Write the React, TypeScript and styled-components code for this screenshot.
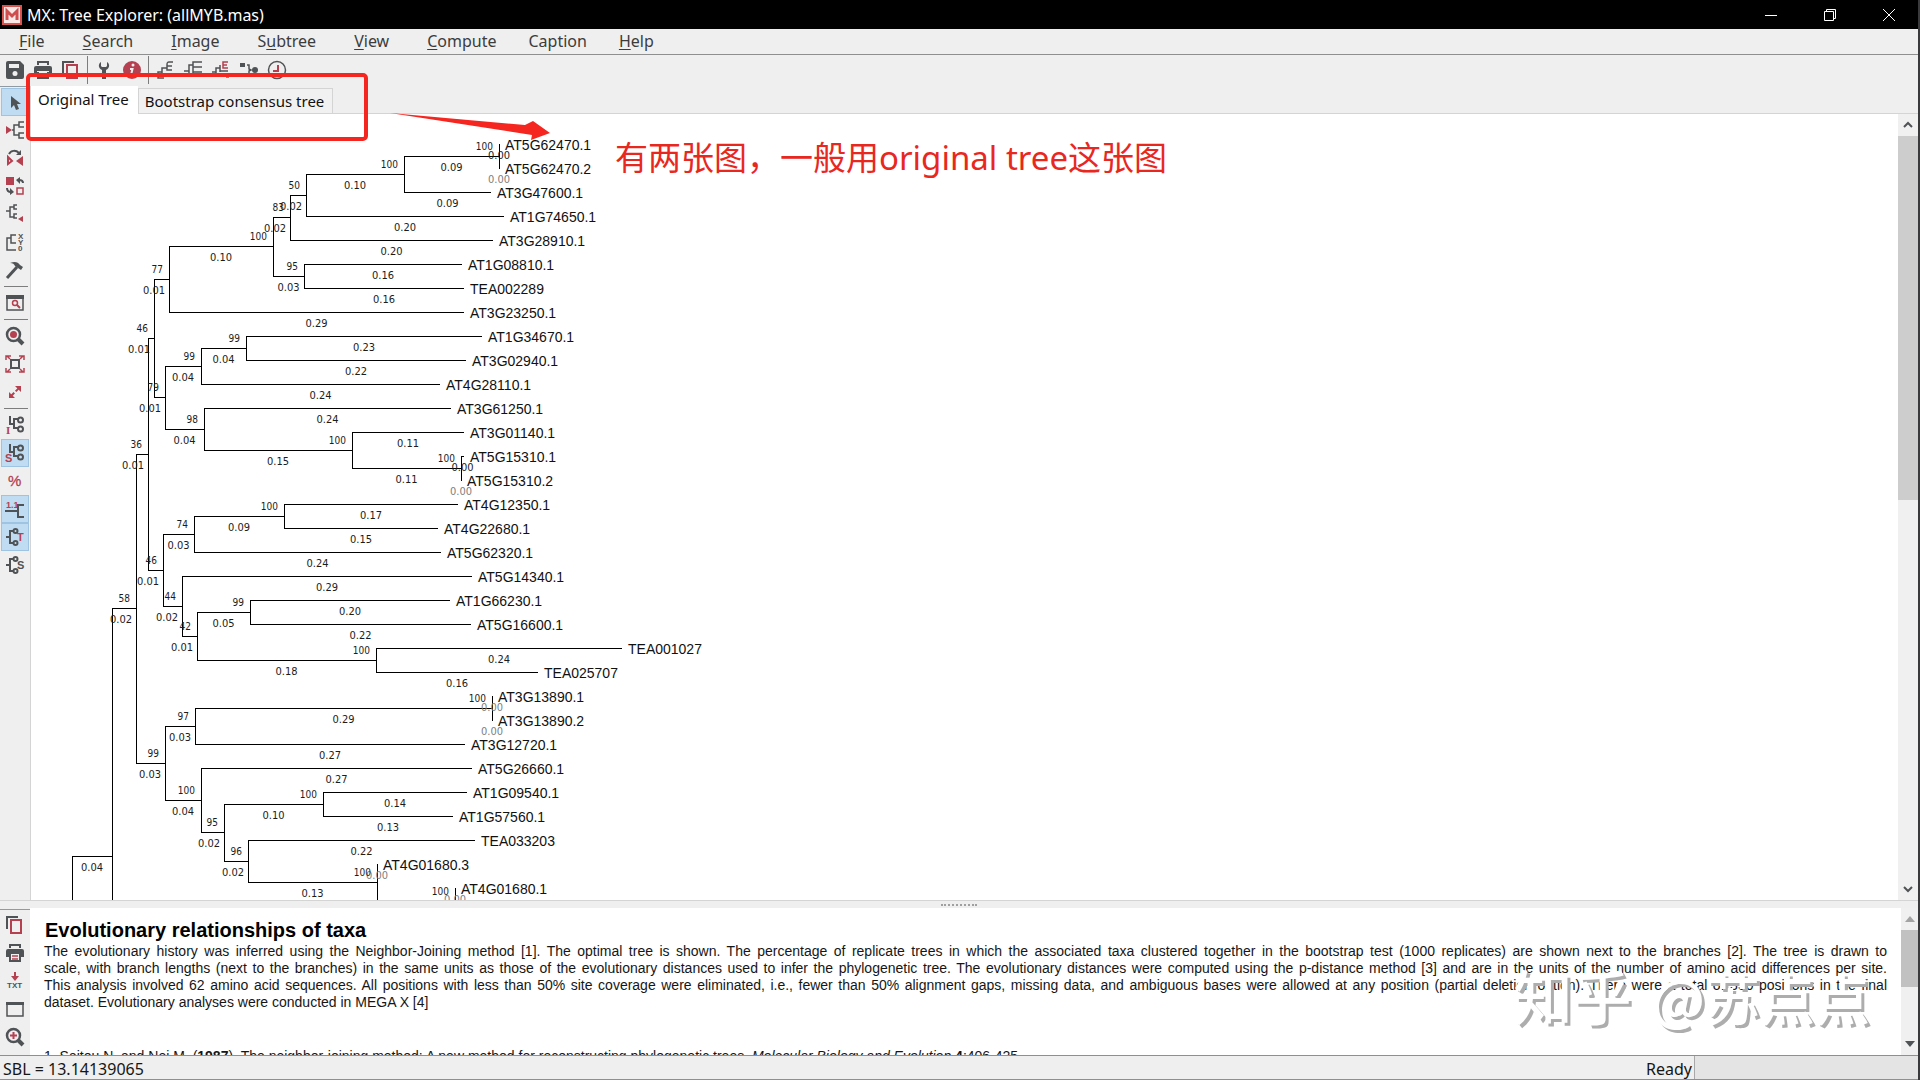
import React from "react";
import styled, { createGlobalStyle } from "styled-components";

const ui = `"Noto Sans", "Open Sans", "Noto Sans CJK SC", sans-serif`;
const arial = `"Liberation Sans", Arial, sans-serif`;
const dark = "#505355";
const red = "#b5404f";

const GlobalStyle = createGlobalStyle`
  * { box-sizing: border-box; }
  body { margin: 0; background: #efefef; font-family: ${ui}; overflow: hidden; }
  button { font: inherit; color: inherit; border: 0; background: none; padding: 0; margin: 0; }
`;

/* ---------- frame ---------- */

const Window = styled.div`
  position: relative;
  display: flex;
  flex-direction: column;
  height: 100vh;
  background: #efefef;
  border-right: 2px solid #3a3a3c;
`;

const TitleBar = styled.header`
  display: flex;
  align-items: center;
  flex: none;
  height: 29px;
  padding-left: 2px;
  gap: 5px;
  background: #000;
  color: #fff;
`;

const Title = styled.h1`
  flex: 1;
  margin: 0;
  font-size: 16px;
  font-weight: 400;
  line-height: 28px;
`;

const ButtonRow = styled.div`
  display: flex;
`;

const CaptionButton = styled.button`
  display: grid;
  place-items: center;
  width: 59px;
  height: 28px;
`;

const MenuBar = styled.nav`
  display: flex;
  align-items: center;
  flex: none;
  height: 26px;
  padding-bottom: 1px;
  border-bottom: 1px solid #8f8f8f;
  color: #3c3c3c;
  font-size: 16px;
  line-height: 22px;
`;

const MenuButton = styled.button<{ $tight?: boolean }>`
  padding: 0 ${(p) => (p.$tight ? 13 : 19)}px;
  u { text-underline-offset: 2px; }
`;

const ToolBar = styled.div`
  display: flex;
  align-items: center;
  flex: none;
  height: 31px;
  padding: 0 0 2px 1px;
`;

const ToolButton = styled.button<{ $on?: boolean }>`
  display: grid;
  place-items: center;
  flex: none;
  width: 28px;
  height: 28px;
  border: 1px solid ${(p) => (p.$on ? "#9fc4e2" : "transparent")};
  background: ${(p) => (p.$on ? "#bfdcf3" : "transparent")};
`;

const Separator = styled.span<{ $across?: boolean }>`
  flex: none;
  align-self: center;
  width: ${(p) => (p.$across ? "24px" : "5px")};
  height: ${(p) => (p.$across ? "5px" : "28px")};
  background: linear-gradient(#7d7d7d, #7d7d7d) center / ${(p) => (p.$across ? "100% 1px" : "1px 100%")} no-repeat;
`;

const Pane = styled.section<{ $height?: number }>`
  display: flex;
  flex: ${(p) => (p.$height ? `0 0 ${p.$height}px` : "1 1 0")};
  min-height: 0;
`;

const SideBar = styled.div<{ $lower?: boolean }>`
  display: flex;
  flex-direction: column;
  flex: none;
  width: 30px;
  margin-top: ${(p) => (p.$lower ? 1 : 0)}px;
  padding: 1px 0 0 1px;
  border-top: 1px solid #8f9aa3;
`;

const TreeColumn = styled.div`
  display: flex;
  flex-direction: column;
  flex: 1;
  min-width: 0;
`;

const Tabs = styled.div`
  display: flex;
  align-items: flex-end;
  flex: none;
  height: 28px;
  border-bottom: 1px solid #d4d4d4;
  border-left: 1px solid #d4d4d4;
`;

const Tab = styled.button<{ $on?: boolean }>`
  height: ${(p) => (p.$on ? 28 : 26)}px;
  margin-bottom: -1px;
  padding: ${(p) => (p.$on ? "0 9px 2px 7px" : "0 8px 0 6px")};
  border: ${(p) => (p.$on ? "0" : "1px solid #d4d4d4")};
  background: ${(p) => (p.$on ? "#fff" : "#f1f1f1")};
  color: #111;
  font-size: 15px;
  line-height: 22px;
`;

const CanvasRow = styled.div`
  display: flex;
  flex: 1;
  min-height: 0;
  background: #fff;
  border-left: 1px solid #d4d4d4;
`;

const Canvas = styled.div`
  flex: 1;
  min-width: 0;
  overflow: hidden;
`;

const ScrollBar = styled.div<{ $width: number }>`
  display: flex;
  flex-direction: column;
  flex: none;
  width: ${(p) => p.$width}px;
  background: #f0f0f0;
`;

const ScrollButton = styled.button`
  display: grid;
  place-items: center;
  flex: none;
  height: 22px;
`;

const Thumb = styled.div<{ $share: string; $color: string }>`
  height: ${(p) => p.$share};
  background: ${(p) => p.$color};
`;

const Track = styled.div`
  flex: 1;
  min-height: 0;
`;

const Splitter = styled.div`
  display: flex;
  justify-content: center;
  align-items: center;
  flex: none;
  height: 8px;
  border-top: 1px solid #d4d4d4;
`;

const Grip = styled.span`
  width: 36px;
  border-top: 2px dotted #a0a0a0;
`;

const Article = styled.article`
  flex: 1;
  min-width: 0;
  overflow: hidden;
  padding: 10px 14px 0;
  background: #fff;
  color: #161616;
  font-family: ${arial};
  font-size: 14px;
  line-height: 17px;

  h2 { margin: 0; padding-left: 1px; color: #000; font-size: 20px; line-height: 25px; }
  p { margin: 0; }
  p + p { margin-top: 37px; }
`;

const Line = styled.span<{ $last?: boolean }>`
  display: block;
  text-align: justify;
  text-align-last: ${(p) => (p.$last ? "left" : "justify")};
`;

const StatusBar = styled.footer`
  display: flex;
  justify-content: space-between;
  flex: none;
  height: 25px;
  overflow: hidden;
  border-top: 1px solid #8f8f8f;
  border-bottom: 1px solid #8f8f8f;
  padding-left: 3px;
  color: #161616;
  font-size: 16px;
  line-height: 26px;
`;

const StatusRight = styled.div`
  display: flex;
  gap: 2px;
`;

const Progress = styled.div`
  width: 224px;
  background: #e4e4e4;
  border-left: 1px solid #a8a8a8;
`;

/* ---------- notes lying over the window ---------- */

const RedFrame = styled.div`
  position: absolute;
  left: 26px;
  top: 73px;
  width: 342px;
  height: 68px;
  border: 4px solid #f5261f;
  border-radius: 5px;
  pointer-events: none;
`;

const Arrow = styled.svg`
  position: absolute;
  left: 388px;
  top: 110px;
  pointer-events: none;
`;

const Note = styled.p`
  position: absolute;
  left: 615px;
  top: 134px;
  margin: 0;
  color: #e8281f;
  font-family: "Noto Sans", "Noto Sans CJK SC", sans-serif;
  font-size: 33px;
  line-height: 48px;
  white-space: nowrap;
`;

const Watermark = styled.p`
  position: absolute;
  right: 48px;
  bottom: 52px;
  display: flex;
  align-items: baseline;
  gap: 20px;
  margin: 0;
  color: #fff;
  font-family: "Noto Sans CJK SC", sans-serif;
  font-size: 55px;
  font-weight: 500;
  line-height: 64px;
  text-shadow: 3px 3px 0 #adadad;
  white-space: nowrap;
  pointer-events: none;

  b { font-size: 59px; font-weight: 500; }
`;

/* ---------- icons ---------- */

const Svg = ({ children }: { children: React.ReactNode }) => (
  <svg width="20" height="20" viewBox="0 0 20 20" fill="none" stroke={dark} strokeWidth="2" aria-hidden="true">
    {children}
  </svg>
);

const Glyph = ({ x, y, size, color, children }: { x: number; y: number; size: number; color: string; children: string }) => (
  <text x={x} y={y} fontSize={size} fill={color} stroke="none" fontWeight="700" fontFamily="Liberation Sans, sans-serif">
    {children}
  </text>
);

const icons: Record<string, React.ReactNode> = {
  Save: (
    <Svg>
      <path d="M3 1h12l4 4v12a2 2 0 0 1-2 2H3a2 2 0 0 1-2-2V3a2 2 0 0 1 2-2z" fill={dark} stroke="none" />
      <path d="M4 4h10v4H4z" fill="#efefef" stroke="none" />
      <circle cx="10" cy="13.5" r="2.5" fill="#efefef" stroke="none" />
    </Svg>
  ),
  Print: (
    <Svg>
      <path d="M5 5V2h10v3" />
      <path d="M3 6h14a2 2 0 0 1 2 2v6h-3v-3H4v3H1V8a2 2 0 0 1 2-2z" fill={dark} stroke="none" />
      <path d="M5 12v6h10v-6" />
    </Svg>
  ),
  "Print caption": (
    <Svg>
      <path d="M5 5V2h10v3" />
      <path d="M3 6h14a2 2 0 0 1 2 2v6h-3v-3H4v3H1V8a2 2 0 0 1 2-2z" fill={dark} stroke="none" />
      <path d="M5 11v7h10v-7" />
      <path d="M7 13h6M7 16h6" stroke={red} strokeWidth="1.5" />
    </Svg>
  ),
  Copy: (
    <Svg>
      <path d="M2 14V2h11" />
      <path d="M6 5h10v13H6z" stroke={red} />
    </Svg>
  ),
  Options: (
    <Svg>
      <path d="M7 2c-3 2-3 6 1 8v9h4v-9c4-2 4-6 1-8v4l-1 1H8L7 6z" fill={dark} stroke="none" />
    </Svg>
  ),
  Information: (
    <Svg>
      <circle cx="10" cy="10" r="9" fill={red} stroke="none" />
      <circle cx="11" cy="5" r="1.5" fill="#efefef" stroke="none" />
      <path d="M8 9h2.5L9 15h3" stroke="#efefef" />
    </Svg>
  ),
  "Sort by order": (
    <Svg>
      <path d="M9 18H3v-6h4M7 15V8h5M7 14h6M18 2h-4c-2 0-2 1-2 3v5h5M12 6h5" strokeWidth="1.5" />
    </Svg>
  ),
  "Balance shape": (
    <Svg>
      <path d="M1 11h5M6 17V5h4M6 16h13M10 13V2h9M10 7h9M10 12h9" strokeWidth="1.5" />
    </Svg>
  ),
  "Root on midpoint": (
    <Svg>
      <path d="M1 12h4M5 17V8h4M5 16h8M9 12V5M9 11h8" strokeWidth="1.5" />
      <path d="M17 2h-5v6h5M12 5h4M15 17h3" stroke={red} strokeWidth="1.5" />
    </Svg>
  ),
  "Compress subtrees": (
    <Svg>
      <path d="M1 3h5v4H1zM1 13h5v4H1z" fill={dark} stroke="none" />
      <path d="M8 5h2v4l2 1-2 1v4H8" strokeWidth="1.5" />
      <circle cx="16" cy="10" r="3" fill={dark} stroke="none" />
    </Svg>
  ),
  Timetree: (
    <Svg>
      <circle cx="10" cy="10" r="8.5" strokeWidth="1.5" />
      <path d="M11 5v6H6" stroke={red} />
    </Svg>
  ),
  Select: (
    <Svg>
      <path d="M6 4v12l3-3 2 5 3-1-2-5h4z" fill={dark} stroke="none" />
    </Svg>
  ),
  "Place root": (
    <Svg>
      <path d="M1 6l6 4-6 4z" fill={red} stroke="none" />
      <path d="M7 10h2M19 2h-5v5h5M19 13h-5v5h5M14 5H9v10h5" strokeWidth="1.5" />
    </Svg>
  ),
  "Flip subtree": (
    <Svg>
      <path d="M4 6c2-4 7-4 10-1" />
      <path d="M11 7h5V2z" fill={dark} stroke="none" />
      <path d="M3 9l4 4-4 3z" stroke={red} />
      <path d="M18 8v10l-7-5z" fill={red} stroke="none" />
    </Svg>
  ),
  "Swap subtree": (
    <Svg>
      <path d="M1 1h8v8H1z" fill={red} stroke="none" />
      <path d="M12 12h6v6h-6z" stroke={red} strokeWidth="1.5" />
      <path d="M18 7c0-2-1-3-4-3M2 12c0 3 1 4 4 4" />
      <path d="M15 1v7l-4-4zM5 12v7l4-3z" fill={dark} stroke="none" />
    </Svg>
  ),
  "Compress subtree": (
    <Svg>
      <path d="M1 7h4M9 3H5v10h4M12 1H9v4h3M12 10H9v4h3" strokeWidth="1.5" />
      <path d="M18 12v6l-5-3z" fill={red} stroke="none" />
    </Svg>
  ),
  "Name subtree": (
    <Svg>
      <path d="M11 3H6v8h5M6 6H2v12h9" strokeWidth="1.5" />
      <Glyph x={13} y={7} size={8} color={dark}>X</Glyph>
      <Glyph x={13} y={13} size={8} color={dark}>Y</Glyph>
      <Glyph x={13} y={19} size={8} color={dark}>0</Glyph>
    </Svg>
  ),
  "Edit subtree": (
    <Svg>
      <path d="M2 18L12 7" strokeWidth="3" />
      <path d="M5 3c5-2 8-1 10 2l3 2-2 3-3-2-3-2c-1-2-2-3-5-3z" fill={dark} stroke="none" />
    </Svg>
  ),
  "Subtree window": (
    <Svg>
      <path d="M2 3h16v14H2z" strokeWidth="1.5" />
      <path d="M1 2h18v4H1z" fill={dark} stroke="none" />
      <circle cx="10" cy="10" r="2.5" stroke={red} strokeWidth="1.5" />
      <path d="M12 12l3 3" stroke={red} />
    </Svg>
  ),
  Zoom: (
    <Svg>
      <circle cx="8.5" cy="8.5" r="6.5" strokeWidth="2.5" />
      <circle cx="8.5" cy="8.5" r="3.5" fill={red} stroke="none" />
      <path d="M13 13l5 5" strokeWidth="4" />
    </Svg>
  ),
  "Fit to window": (
    <Svg>
      <path d="M6 6h8v8H6z" />
      <path d="M1 6V2h5M14 2h5v4M19 14v4h-5M6 18H1v-4M2 2l3 3M18 2l-3 3M18 18l-3-3M2 18l3-3" stroke={red} strokeWidth="1.5" />
    </Svg>
  ),
  "Resize tree": (
    <Svg>
      <path d="M5 15L15 5" stroke={red} strokeWidth="2" strokeDasharray="6 2" />
      <path d="M16 4v6l-6-6zM4 16v-6l6 6z" fill={red} stroke="none" />
    </Svg>
  ),
  "Node IDs": (
    <Svg>
      <path d="M5 1v8h4M9 14V4h4M9 13h4" />
      <circle cx="15.5" cy="5" r="2.5" />
      <circle cx="15.5" cy="14" r="2.5" />
      <text x="1" y="19" fontSize="11" fill={red} stroke="none" fontWeight="700" fontFamily="Liberation Serif, serif">I</text>
    </Svg>
  ),
  "Bootstrap values": (
    <Svg>
      <path d="M5 1v8h4M9 14V4h4M9 13h4" />
      <circle cx="15.5" cy="5" r="2.5" />
      <circle cx="15.5" cy="14" r="2.5" />
      <Glyph x={0} y={19} size={11} color={red}>S</Glyph>
    </Svg>
  ),
  "Percent coverage": (
    <Svg>
      <text x="3" y="15" fontSize="15" fill={red} stroke={red} strokeWidth="0.3" fontFamily="Liberation Sans, sans-serif">%</text>
    </Svg>
  ),
  "Branch lengths": (
    <Svg>
      <Glyph x={1} y={9} size={9} color={red}>1.1</Glyph>
      <path d="M0 12h12M19 6h-6v12h6" />
    </Svg>
  ),
  "Taxon names": (
    <Svg>
      <path d="M1 10h3M9 4H5v12h4" />
      <circle cx="10.5" cy="4" r="2" />
      <circle cx="10.5" cy="16" r="2" />
      <Glyph x={12} y={14} size={11} color={red}>T</Glyph>
    </Svg>
  ),
  "Node statistics": (
    <Svg>
      <path d="M1 10h3M9 4H5v12h4" />
      <circle cx="10.5" cy="4" r="2" />
      <circle cx="10.5" cy="16" r="2" />
      <Glyph x={12} y={14} size={11} color={dark}>S</Glyph>
    </Svg>
  ),
  "Save as text": (
    <Svg>
      <path d="M10 1v6" stroke={red} />
      <path d="M6 5h8l-4 5z" fill={red} stroke="none" />
      <Glyph x={2} y={17} size={8} color={dark}>TXT</Glyph>
    </Svg>
  ),
  "Caption window": (
    <Svg>
      <path d="M2 4h16v13H2z" strokeWidth="1.5" />
      <path d="M1 3h18v3H1z" fill={dark} stroke="none" />
    </Svg>
  ),
  "Zoom in": (
    <Svg>
      <circle cx="8.5" cy="8.5" r="6.5" strokeWidth="2.5" />
      <path d="M8.5 5v7M5 8.5h7" stroke={red} />
      <path d="M13 13l5 5" strokeWidth="4" />
    </Svg>
  ),
};

const Tools = ({ names, on = [], across }: { names: string[]; on?: string[]; across?: boolean }) => (
  <>
    {names.map((name, i) =>
      name === "|" ? (
        <Separator key={i} $across={across} />
      ) : (
        <ToolButton key={i} type="button" aria-label={name} $on={on.includes(name)}>
          {icons[name]}
        </ToolButton>
      )
    )}
  </>
);

/* ---------- tree ---------- */

type TreeNode = { x: number; y: number; len?: string; support?: number; name?: string; grey?: boolean; kids: TreeNode[] };

const FIRST_ROW = 144;
const ROW = 24;
let row = 0;

const leaf = (name: string, x: number, len: string, grey = false): TreeNode => ({
  x, len, name, grey, y: FIRST_ROW + ROW * row++, kids: [],
});
const off = (x: number, y: number): TreeNode => ({ x, y, kids: [] });
const node = (x: number, support: number | undefined, len: string | undefined, ...kids: TreeNode[]): TreeNode => ({
  x, support, len, kids, y: Math.round((kids[0].y + kids[1].y) / 2 - 0.25),
});

const tree = node(72, undefined, undefined,
  node(112, undefined, "0.04",
    node(136, 58, "0.02",
      node(148, 36, "0.01",
        node(154, 46, "0.01",
          node(169, 77, "0.01",
            node(273, 100, "0.10",
              node(290, 83, "0.02",
                node(306, 50, "0.02",
                  node(404, 100, "0.10",
                    node(499, 100, "0.09", leaf("AT5G62470.1", 499, "0.00"), leaf("AT5G62470.2", 499, "0.00", true)),
                    leaf("AT3G47600.1", 491, "0.09")),
                  leaf("AT1G74650.1", 504, "0.20")),
                leaf("AT3G28910.1", 493, "0.20")),
              node(304, 95, "0.03", leaf("AT1G08810.1", 462, "0.16"), leaf("TEA002289", 464, "0.16"))),
            leaf("AT3G23250.1", 464, "0.29")),
          node(165, 79, "0.01",
            node(201, 99, "0.04",
              node(246, 99, "0.04", leaf("AT1G34670.1", 482, "0.23"), leaf("AT3G02940.1", 466, "0.22")),
              leaf("AT4G28110.1", 440, "0.24")),
            node(204, 98, "0.04",
              leaf("AT3G61250.1", 451, "0.24"),
              node(352, 100, "0.15",
                leaf("AT3G01140.1", 464, "0.11"),
                node(461, 100, "0.11", leaf("AT5G15310.1", 464, "0.00"), leaf("AT5G15310.2", 461, "0.00", true)))))),
        node(163, 46, "0.01",
          node(194, 74, "0.03",
            node(284, 100, "0.09", leaf("AT4G12350.1", 458, "0.17"), leaf("AT4G22680.1", 438, "0.15")),
            leaf("AT5G62320.1", 441, "0.24")),
          node(182, 44, "0.02",
            leaf("AT5G14340.1", 472, "0.29"),
            node(197, 42, "0.01",
              node(250, 99, "0.05", leaf("AT1G66230.1", 450, "0.20"), leaf("AT5G16600.1", 471, "0.22")),
              node(376, 100, "0.18", leaf("TEA001027", 622, "0.24"), leaf("TEA025707", 538, "0.16")))))),
      node(165, 99, "0.03",
        node(195, 97, "0.03",
          node(492, 100, "0.29", leaf("AT3G13890.1", 492, "0.00", true), leaf("AT3G13890.2", 492, "0.00", true)),
          leaf("AT3G12720.1", 465, "0.27")),
        node(201, 100, "0.04",
          leaf("AT5G26660.1", 472, "0.27"),
          node(224, 95, "0.02",
            node(323, 100, "0.10", leaf("AT1G09540.1", 467, "0.14"), leaf("AT1G57560.1", 453, "0.13")),
            node(248, 96, "0.02",
              leaf("TEA033203", 475, "0.22"),
              node(377, 100, "0.13",
                leaf("AT4G01680.3", 377, "0.00", true),
                node(455, 100, undefined, leaf("AT4G01680.1", 455, "0.00", true), off(455, 914)))))))),
    off(112, 1104)),
  off(72, 1300));

const TreeSvg = styled.svg`
  display: block;
  path { stroke: #000; fill: none; shape-rendering: crispEdges; }
  text { fill: #1c1c1c; font-family: "DejaVu Sans Condensed", "DejaVu Sans", sans-serif; font-size: 10px; }
  .length { font-size: 11px; }
  .name { fill: #111; font-family: ${arial}; font-size: 14px; }
  .grey { fill: #808080; }
`;

const Branch = ({ node: n, from }: { node: TreeNode; from?: number }) => {
  const y = n.y + 0.5;
  const isLeaf = n.kids.length === 0;
  const middle = from === undefined ? n.x : (from + n.x) / 2;
  const lenX = isLeaf ? middle : Math.min(middle, n.x - 15);
  return (
    <g>
      {from !== undefined && <path d={`M${from} ${y}H${isLeaf ? n.x : n.x + 1}`} />}
      {!isLeaf && <path d={`M${n.x + 0.5} ${n.kids[0].y}V${n.kids[1].y + 1}`} />}
      {n.kids.map((kid, i) => <Branch key={i} node={kid} from={n.x} />)}
      {n.len && <text className={n.grey ? "length grey" : "length"} x={lenX} y={n.y + 15} textAnchor="middle">{n.len}</text>}
      {n.support && <text x={n.x - 6} y={n.y - 6} textAnchor="end">{n.support}</text>}
      {n.name && <text className="name" x={n.x + 6} y={n.y + 6}>{n.name}</text>}
    </g>
  );
};

/* ---------- page ---------- */

const menus = [["", "F", "ile"], ["", "S", "earch"], ["", "I", "mage"], ["S", "u", "btree"], ["", "V", "iew"], ["", "C", "ompute"], ["Caption", "", ""], ["", "H", "elp"]];

export default function App() {
  return (
    <Window>
      <GlobalStyle />
      <TitleBar>
        <svg width="20" height="20" viewBox="0 0 20 20" aria-hidden="true">
          <path d="M0 0h20v20H0z" fill="#d9534f" />
          <path d="M2 2h16v16H2z" fill="#fbe9e7" />
          <path d="M5 15V6l5 5 5-5v9" fill="none" stroke="#cf4f50" strokeWidth="3" />
        </svg>
        <Title>MX: Tree Explorer: (allMYB.mas)</Title>
        <ButtonRow>
          <CaptionButton type="button" aria-label="Minimize">
            <svg width="14" height="14" viewBox="0 0 14 14" stroke="#fff"><path d="M1 7.5h12" /></svg>
          </CaptionButton>
          <CaptionButton type="button" aria-label="Restore">
            <svg width="14" height="14" viewBox="0 0 14 14" fill="none" stroke="#fff"><path d="M1.5 3.5h9v9h-9zM3.5 3V1.5h9v9H11" /></svg>
          </CaptionButton>
          <CaptionButton type="button" aria-label="Close">
            <svg width="14" height="14" viewBox="0 0 14 14" stroke="#fff"><path d="M1 1l12 12M13 1L1 13" /></svg>
          </CaptionButton>
        </ButtonRow>
      </TitleBar>

      <MenuBar aria-label="Main menu">
        {menus.map(([a, key, b]) => (
          <MenuButton key={a + key + b} type="button" $tight={a === "Caption"}>
            {a}{key && <u>{key}</u>}{b}
          </MenuButton>
        ))}
      </MenuBar>

      <ToolBar role="toolbar" aria-label="Tree tools">
        <Tools names={["Save", "Print", "Copy", "|", "Options", "Information", "|", "Sort by order", "Balance shape", "Root on midpoint", "Compress subtrees", "Timetree"]} />
      </ToolBar>

      <Pane>
        <SideBar role="toolbar" aria-label="Subtree tools">
          <Tools
            across
            on={["Select", "Bootstrap values", "Branch lengths", "Taxon names"]}
            names={["Select", "Place root", "Flip subtree", "Swap subtree", "Compress subtree", "Name subtree", "Edit subtree", "|", "Subtree window", "|", "Zoom", "Fit to window", "Resize tree", "|", "Node IDs", "Bootstrap values", "Percent coverage", "Branch lengths", "Taxon names", "Node statistics"]}
          />
        </SideBar>
        <TreeColumn>
          <Tabs role="tablist">
            <Tab role="tab" type="button" aria-selected="true" $on>Original Tree</Tab>
            <Tab role="tab" type="button" aria-selected="false">Bootstrap consensus tree</Tab>
          </Tabs>
          <CanvasRow>
            <Canvas>
              <TreeSvg width="900" height="1000" viewBox="31 114 900 1000" role="img" aria-label="Phylogenetic tree">
                <Branch node={tree} />
              </TreeSvg>
            </Canvas>
            <ScrollBar $width={20}>
              <ScrollButton type="button" aria-label="Scroll tree up">
                <svg width="10" height="8" viewBox="0 0 10 8" fill="none" stroke={dark} strokeWidth="2"><path d="M1 6l4-4 4 4" /></svg>
              </ScrollButton>
              <Track><Thumb $share="49%" $color="#cdcdcd" /></Track>
              <ScrollButton type="button" aria-label="Scroll tree down">
                <svg width="10" height="8" viewBox="0 0 10 8" fill="none" stroke={dark} strokeWidth="2"><path d="M1 2l4 4 4-4" /></svg>
              </ScrollButton>
            </ScrollBar>
          </CanvasRow>
        </TreeColumn>
      </Pane>

      <Splitter><Grip /></Splitter>

      <Pane $height={147}>
        <SideBar role="toolbar" aria-label="Caption tools" $lower>
          <Tools names={["Copy", "Print caption", "Save as text", "Caption window", "Zoom in"]} />
        </SideBar>
        <Article>
          <h2>Evolutionary relationships of taxa</h2>
          <p>
            <Line>
              The evolutionary history was inferred using the Neighbor-Joining method [1]. The optimal tree is shown. The
              percentage of replicate trees in which the associated taxa clustered together in the bootstrap test (1000
              replicates) are shown next to the branches [2]. The tree is drawn to
            </Line>
            <Line>
              scale, with branch lengths (next to the branches) in the same units as those of the evolutionary distances
              used to infer the phylogenetic tree. The evolutionary distances were computed using the p-distance method
              [3] and are in the units of the number of amino acid differences per site.
            </Line>
            <Line>
              This analysis involved 62 amino acid sequences. All positions with less than 50% site coverage were
              eliminated, i.e., fewer than 50% alignment gaps, missing data, and ambiguous bases were allowed at any
              position (partial deletion option). There were a total of 330 positions in the final
            </Line>
            <Line $last>dataset. Evolutionary analyses were conducted in MEGA X [4]</Line>
          </p>
          <p>
            1. Saitou N. and Nei M. (<b>1987</b>). The neighbor-joining method: A new method for reconstructing
            phylogenetic trees. <i>Molecular Biology and Evolution</i> <b>4</b>:406-425.
          </p>
        </Article>
        <ScrollBar $width={17}>
          <ScrollButton type="button" aria-label="Scroll caption up">
            <svg width="10" height="6" viewBox="0 0 10 6"><path d="M5 0l5 6H0z" fill="#a3a3a3" /></svg>
          </ScrollButton>
          <Track><Thumb $share="55%" $color="#c1c1c1" /></Track>
          <ScrollButton type="button" aria-label="Scroll caption down">
            <svg width="10" height="6" viewBox="0 0 10 6"><path d="M0 0h10L5 6z" fill={dark} /></svg>
          </ScrollButton>
        </ScrollBar>
      </Pane>

      <StatusBar>
        <span>SBL = 13.14139065</span>
        <StatusRight>
          <span>Ready</span>
          <Progress />
        </StatusRight>
      </StatusBar>

      <RedFrame />
      <Arrow width="164" height="32" viewBox="0 0 164 32" aria-hidden="true">
        <path d="M2 3L137 15L145 11L162 23L143 30L144 25z" fill="#f5261f" />
      </Arrow>
      <Note>有两张图，一般用original tree这张图</Note>
      <Watermark><b>知乎</b><span>@苏点点</span></Watermark>
    </Window>
  );
}
